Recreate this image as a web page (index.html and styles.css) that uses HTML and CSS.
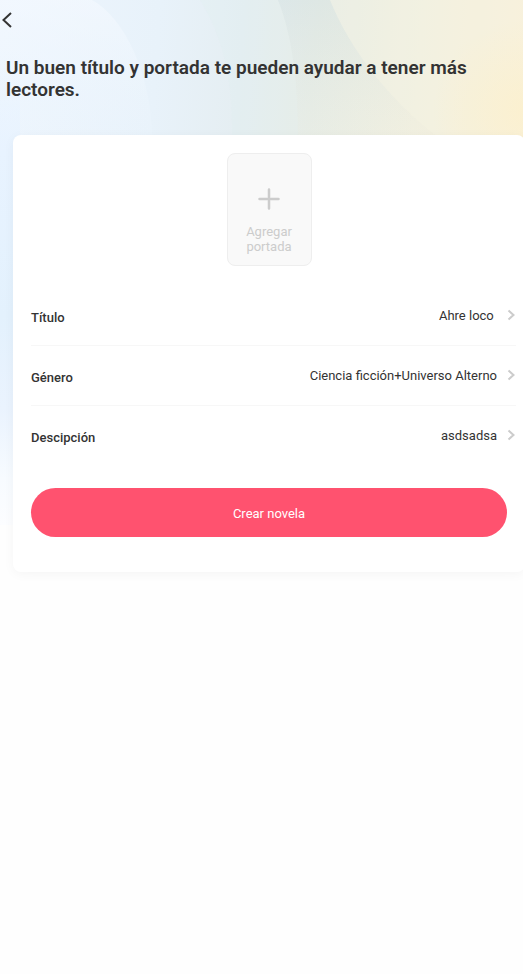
FILE: index.html
```
<!DOCTYPE html>
<html lang="es">
<head>
<meta charset="utf-8">
<meta name="viewport" content="width=device-width, initial-scale=1">
<title>Crear novela</title>
<link rel="stylesheet" href="styles.css">
</head>
<body>
<div class="page">
  <svg class="backdrop" viewBox="0 0 523 525" preserveAspectRatio="none" aria-hidden="true">
    <defs>
      <linearGradient id="base" gradientUnits="userSpaceOnUse" x1="0" y1="40" x2="523" y2="80">
        <stop offset="0" stop-color="#edf5fe"/>
        <stop offset=".3" stop-color="#e8f2fa"/>
        <stop offset=".46" stop-color="#e5eef2"/>
        <stop offset=".6" stop-color="#e8ede6"/>
        <stop offset=".8" stop-color="#f2f0e0"/>
        <stop offset="1" stop-color="#f9f0da"/>
      </linearGradient>
      <linearGradient id="dark" x1="0" y1="0" x2="0" y2="1">
        <stop offset="0" stop-color="#c6d9df" stop-opacity=".3"/>
        <stop offset="1" stop-color="#d8e2dc" stop-opacity=".05"/>
      </linearGradient>
      <linearGradient id="light" x1="0" y1="0" x2="0" y2="1">
        <stop offset="0" stop-color="#f6faff" stop-opacity=".55"/>
        <stop offset="1" stop-color="#eff7ff" stop-opacity=".15"/>
      </linearGradient>
      <linearGradient id="side" x1="0" y1="0" x2="0" y2="1">
        <stop offset="0" stop-color="#e8f3ff" stop-opacity="0"/>
        <stop offset=".2" stop-color="#e8f3ff"/>
        <stop offset=".55" stop-color="#e3f1fd"/>
        <stop offset=".75" stop-color="#eaf3fe"/>
        <stop offset=".9" stop-color="#f7fbff"/>
        <stop offset="1" stop-color="#fcfdff"/>
      </linearGradient>
      <radialGradient id="glow">
        <stop offset="0" stop-color="#fcf0cc" stop-opacity=".75"/>
        <stop offset="1" stop-color="#fcf0cc" stop-opacity="0"/>
      </radialGradient>
    </defs>
    <rect width="523" height="525" fill="url(#base)"/>
    <path d="M0 0H92C125 18 151 75 152 135H0Z" fill="url(#light)"/>
    <path d="M200 0C225 40 233 85 232 135H298C298 80 292 35 278 0Z" fill="#dfeeee" opacity=".25"/>
    <path d="M278 0C292 35 298 80 298 135H435C390 100 350 50 330 0Z" fill="url(#dark)"/>
    <path d="M330 0C350 50 390 100 435 135H523V0Z" fill="#f7f5e5" opacity=".2"/>
    <circle cx="523" cy="110" r="90" fill="url(#glow)"/>
    <rect y="60" width="20" height="465" fill="url(#side)"/>
  </svg>

  <header class="topbar">
    <button class="back" type="button" aria-label="Volver">
      <svg width="12" height="18" viewBox="0 0 12 18" fill="none" stroke="#333" stroke-width="2"><path d="M11 2 3.500 9 11 16"/></svg>
    </button>
  </header>

  <main>
    <h1 class="heading">Un buen título y portada te pueden ayudar a tener más lectores.</h1>
    <form class="card">
      <button class="cover" type="button">
        <svg width="22" height="22" viewBox="0 0 22 22" fill="none" stroke="#ccc" stroke-width="2.500" stroke-linecap="round" aria-hidden="true"><path d="M11 1.500V20.500M1.500 11H20.500"/></svg>
        <span>Agregar portada</span>
      </button>
      <div class="fields">
        <button class="row" type="button">
          <span class="label">Título</span>
          <span class="value">Ahre loco </span>
          <svg class="chevron" viewBox="0 0 8 12" aria-hidden="true"><path d="M1.500 1.500 6.500 6 1.500 10.500"/></svg>
        </button>
        <button class="row" type="button">
          <span class="label">Género</span>
          <span class="value">Ciencia ficción+Universo Alterno</span>
          <svg class="chevron" viewBox="0 0 8 12" aria-hidden="true"><path d="M1.500 1.500 6.500 6 1.500 10.500"/></svg>
        </button>
        <button class="row" type="button">
          <span class="label">Descipción</span>
          <span class="value">asdsadsa</span>
          <svg class="chevron" viewBox="0 0 8 12" aria-hidden="true"><path d="M1.500 1.500 6.500 6 1.500 10.500"/></svg>
        </button>
      </div>
      <button class="submit" type="submit">Crear novela</button>
    </form>
  </main>
</div>
</body>
</html>
```
FILE: styles.css
```
* {
  box-sizing: border-box;
}

body {
  margin: 0;
  background: #fefefe;
  color: #333;
  font-family: Roboto, "Liberation Sans", sans-serif;
}

button {
  margin: 0;
  padding: 0;
  border: 0;
  background: none;
  color: inherit;
  font: inherit;
  cursor: pointer;
}

.page {
  position: relative;
  min-height: 100vh;
  overflow: hidden;
}

.backdrop {
  position: absolute;
  top: 0;
  left: 0;
  z-index: -1;
  width: 100%;
  height: 525px;
}

.topbar {
  display: flex;
  align-items: center;
  height: 40px;
}

.back {
  display: flex;
  padding: 4px 8px 4px 0;
}

.heading {
  margin: 17px 6px 34px;
  font-size: 19px;
  line-height: 22px;
  font-weight: 600;
}

.card {
  display: flex;
  flex-direction: column;
  margin: 0 -2px 0 13px;
  padding: 18px 18px 35px;
  border-radius: 8px;
  background: #fff;
  box-shadow: 0 2px 12px rgba(0, 0, 0, 0.04);
}

.cover {
  display: flex;
  flex-direction: column;
  align-items: center;
  gap: 14px;
  align-self: center;
  width: 85px;
  height: 113px;
  padding: 34px 12px 0;
  border: 1px solid #eee;
  border-radius: 8px;
  background: #f9f9f9;
  color: #ccc;
  font-size: 13px;
  line-height: 15px;
}

.fields {
  margin: 20px -9px 22px 0;
}

.row {
  display: flex;
  align-items: center;
  width: 100%;
  height: 60px;
  border-bottom: 1px solid #f7f7f7;
  font-size: 13px;
  line-height: 16px;
}

.row:last-child {
  border-bottom-color: transparent;
}

.label {
  padding-top: 4px;
  font-weight: 500;
}

.value {
  flex: 1;
  text-align: right;
  white-space: pre;
}

.chevron {
  width: 8px;
  height: 12px;
  margin: 0 1px 2px 10px;
  fill: none;
  stroke: #ccc;
  stroke-width: 2;
}

.submit {
  height: 49px;
  padding-top: 1px;
  border-radius: 25px;
  background: #ff526f;
  color: #fff;
  font-size: 13px;
}
```
